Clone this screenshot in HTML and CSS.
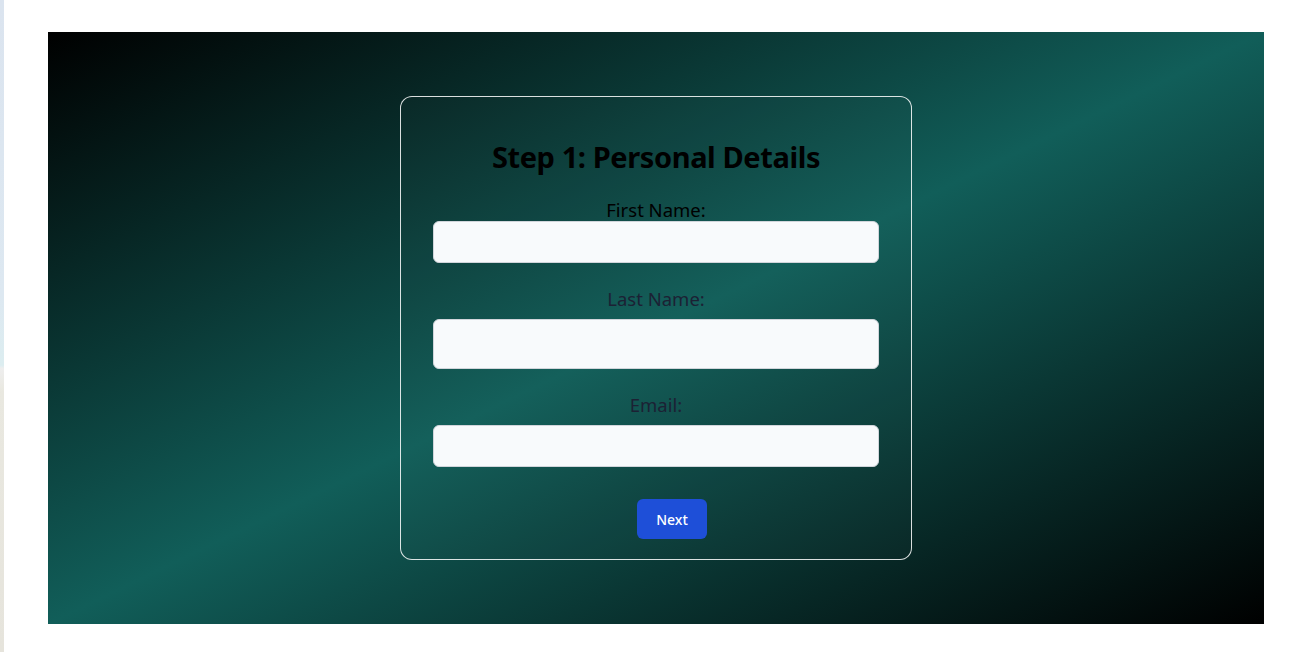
FILE: index.html
```html
<!DOCTYPE html>
<html lang="en">
<head>
<meta charset="utf-8">
<title>Step 1: Personal Details</title>
<link rel="stylesheet" href="styles.css">
</head>
<body>
<div class="edge"></div>
<main class="page">
  <section class="stage">
    <form class="card">
      <h1 class="title">Step 1: Personal Details</h1>
      <div class="field field-first">
        <label class="label label-dark" for="first">First Name:</label>
        <input class="input input-short" id="first" type="text">
      </div>
      <div class="field">
        <label class="label" for="last">Last Name:</label>
        <input class="input input-tall" id="last" type="text">
      </div>
      <div class="field">
        <label class="label" for="email">Email:</label>
        <input class="input input-short" id="email" type="email">
      </div>
      <div class="actions">
        <button class="btn" type="button">Next</button>
      </div>
    </form>
  </section>
</main>
</body>
</html>
```

FILE: styles.css
```css
* { box-sizing: border-box; }

html, body {
  margin: 0;
  padding: 0;
  background: #ffffff;
  font-family: "Noto Sans", "Open Sans", "DejaVu Sans", sans-serif;
}

.edge {
  position: fixed;
  left: 0;
  top: 0;
  width: 4px;
  height: 652px;
  background: linear-gradient(to bottom, #dbe4ef 0%, #dde8f1 45%, #dcedf0 56%, #eeeeee 56.5%, #e9e8e0 60%, #e6e4dc 100%);
}

.page {
  padding: 32px 44px 28px 48px;
}

.stage {
  width: 1216px;
  height: 592px;
  background: linear-gradient(to bottom right, #000000 0%, #115e59 50%, #000000 100%);
  display: flex;
  align-items: center;
  justify-content: center;
}

.card {
  width: 512px;
  padding: 32px 32px 20px;
  border: 1px solid rgba(255, 255, 255, 0.85);
  border-radius: 12px;
  background: rgba(255, 255, 255, 0.015);
  display: flex;
  flex-direction: column;
}

.title {
  margin: 10px 0 19px;
  font-size: 29px;
  line-height: 36px;
  font-weight: 700;
  letter-spacing: -0.4px;
  color: #000000;
  text-align: center;
}

.field {
  display: flex;
  flex-direction: column;
  gap: 6px;
  margin-bottom: 22px;
}

.field-first {
  gap: 0;
}

.label {
  display: block;
  font-size: 18.5px;
  line-height: 28px;
  color: #1c2134;
  text-align: center;
}

.label-dark {
  color: #000000;
  line-height: 27px;
  padding-top: 2px;
  margin-bottom: -2px;
}

.input {
  display: block;
  width: 100%;
  border: 1px solid #d1d5db;
  border-radius: 6px;
  background: #f8fafc;
  font: inherit;
  padding: 0 12px;
}

.input-short { height: 42px; }
.input-tall { height: 50px; }

.actions {
  display: flex;
  justify-content: center;
  padding-left: 32px;
  margin-top: 10px;
}

.btn {
  width: 70px;
  height: 40px;
  border: none;
  border-radius: 6px;
  background: #1e4fd8;
  color: #ffffff;
  font-family: "Noto Sans", "Open Sans", sans-serif;
  font-size: 14px;
  font-weight: 500;
}
```
